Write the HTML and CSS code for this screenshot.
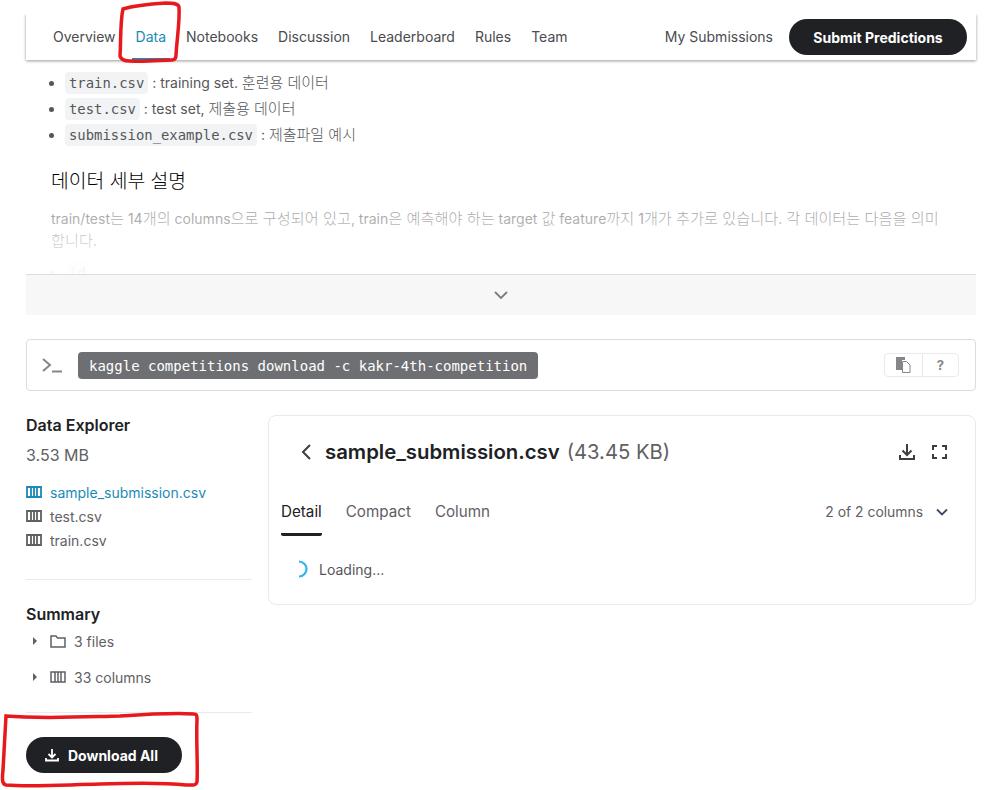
FILE: index.html
```html
<!DOCTYPE html>
<html lang="ko">

<head>
    <meta charset="UTF-8">
    <title>Data</title>
    <link rel="stylesheet" href="styles.css">
</head>

<body>
    <div class="page">
        <nav class="tabs">
            <a href="#">Overview</a>
            <a href="#" class="active">Data</a>
            <a href="#">Notebooks</a>
            <a href="#">Discussion</a>
            <a href="#">Leaderboard</a>
            <a href="#">Rules</a>
            <a href="#">Team</a>
            <a href="#" class="my-subs">My Submissions</a>
            <button class="pill submit">Submit Predictions</button>
        </nav>

        <div class="desc">
            <ul class="file-notes">
                <li><code>train.csv</code> : training set. <span class="ko">훈련용 데이터</span></li>
                <li><code>test.csv</code> : test set, <span class="ko">제출용 데이터</span></li>
                <li><code>submission_example.csv</code> : <span class="ko">제출파일 예시</span></li>
            </ul>
            <h3>데이터 세부 설명</h3>
            <p>train/test<span class="ko">는</span> 14<span class="ko">개의</span> columns<span class="ko">으로 구성되어 있고</span>, train<span class="ko">은 예측해야 하는</span> target <span class="ko">값</span> feature<span class="ko">까지</span> 1<span class="ko">개가 추가로 있습니다</span>. <span class="ko">각 데이터는 다음을 의미</span><br><span class="ko">합니다</span>.</p>
            <ul class="file-notes">
                <li><code>id</code></li>
            </ul>
            <div class="fade"></div>
        </div>
        <div class="expand">
            <svg width="16" height="10" viewBox="0 0 16 10"><path d="M2 2l6 6 6-6" fill="none" stroke="#7b7c80" stroke-width="1.8"/></svg>
        </div>

        <div class="cli">
            <svg width="22" height="16" viewBox="0 0 22 16"><path d="M1 2l7 6-7 6" fill="none" stroke="#85868a" stroke-width="2"/><path d="M10 14.500h10" stroke="#85868a" stroke-width="2"/></svg>
            <code class="cmd">kaggle competitions download -c kakr-4th-competition</code>
            <div class="cli-btns">
                <span class="cli-btn copy">
                    <svg width="15" height="16" viewBox="0 0 15 16"><path d="M0 0h9v3H6v10H0z" fill="#85868a"/><path d="M6.500 4.500h4l3.500 3.500v7.500H6.500z" fill="#fff" stroke="#85868a"/></svg>
                </span>
                <span class="cli-btn help">?</span>
            </div>
        </div>

        <div class="explorer">
            <aside class="side">
                <h4>Data Explorer</h4>
                <div class="size">3.53 MB</div>
                <ul class="files">
                    <li class="current">
                        <svg width="16" height="12" viewBox="0 0 16 12"><path d="M1 1h14v10H1zM5 1v10M8 1v10M11 1v10" fill="none" stroke="#1a8bb8" stroke-width="1.8"/></svg>
                        sample_submission.csv
                    </li>
                    <li>
                        <svg width="16" height="12" viewBox="0 0 16 12"><path d="M1 1h14v10H1zM5 1v10M8 1v10M11 1v10" fill="none" stroke="#5f6064" stroke-width="1.8"/></svg>
                        test.csv
                    </li>
                    <li>
                        <svg width="16" height="12" viewBox="0 0 16 12"><path d="M1 1h14v10H1zM5 1v10M8 1v10M11 1v10" fill="none" stroke="#5f6064" stroke-width="1.8"/></svg>
                        train.csv
                    </li>
                </ul>
                <div class="sum-block">
                    <h4>Summary</h4>
                    <div class="sum-row">
                        <span class="caret"></span>
                        <svg width="16" height="13" viewBox="0 0 16 13"><path d="M1 1h5l1.500 2H15v9H1z" fill="none" stroke="#5f6064" stroke-width="1.500"/></svg>
                        3 files
                    </div>
                    <div class="sum-row two">
                        <span class="caret"></span>
                        <svg width="16" height="12" viewBox="0 0 16 12"><path d="M1 1h14v10H1zM5 1v10M8 1v10M11 1v10" fill="none" stroke="#5f6064" stroke-width="1.500"/></svg>
                        33 columns
                    </div>
                </div>
                <div class="dl-block">
                    <button class="pill download">
                        <svg width="14" height="14" viewBox="0 0 14 14"><path d="M7 1v8M3.500 6L7 9.500 10.500 6M1 10v2.500h12V10" fill="none" stroke="#fff" stroke-width="1.800"/></svg>
                        Download All
                    </button>
                </div>
            </aside>

            <section class="viewer">
                <div class="viewer-head">
                    <svg width="12" height="18" viewBox="0 0 12 18"><path d="M10 2L3 9l7 7" fill="none" stroke="#3c3d41" stroke-width="2"/></svg>
                    <span class="fname">sample_submission.csv</span>
                    <span class="fsize">(43.45 KB)</span>
                    <div class="head-icons">
                        <svg width="18" height="18" viewBox="0 0 18 18"><path d="M9 1v11M4.500 7.500L9 12l4.500-4.500M2 12v4h14v-4" fill="none" stroke="#3c3d41" stroke-width="2"/></svg>
                        <svg width="15" height="14" viewBox="0 0 15 14"><path d="M1 5V1h4M10 1h4v4M14 9v4h-4M5 13H1V9" fill="none" stroke="#3c3d41" stroke-width="2"/></svg>
                    </div>
                </div>
                <div class="viewer-tabs">
                    <span class="vtab on">Detail</span>
                    <span class="vtab">Compact</span>
                    <span class="vtab">Column</span>
                    <span class="col-count">2 of 2 columns
                        <svg width="12" height="8" viewBox="0 0 12 8"><path d="M1 1.500l5 5 5-5" fill="none" stroke="#3c4a66" stroke-width="1.800"/></svg>
                    </span>
                </div>
                <div class="loading">
                    <svg width="14" height="18" viewBox="0 0 14 18"><path d="M2 1.500a7.500 7.500 0 0 1 0 15" fill="none" stroke="#2fb5ee" stroke-width="2.200"/></svg>
                    Loading...
                </div>
            </section>
        </div>
    </div>

    <!-- marcas rojas dibujadas a mano sobre la captura -->
    <svg class="marks" width="985" height="790" viewBox="0 0 985 790">
        <path d="M123 9C120 22 121 42 120 56 121 60 124 61 130 61 146 62 162 60 172 60 175 60 176 58 176 55 177 38 180 20 179 7 178 3 172 3 166 3 150 4 136 5 123 9Z" fill="none" stroke="#e8191c" stroke-width="3.500"/>
        <path d="M6 716C40 719 80 717 120 716 150 714 180 713 194 714 197 714 197 716 197 720 196 740 198 765 197 782 196 786 192 785 186 785 160 782 130 783 100 784 60 785 30 787 6 785 2 784 2 780 3 770 4 750 5 735 6 716Z" fill="none" stroke="#e8191c" stroke-width="3.500"/>
    </svg>
</body>

</html>
```

FILE: styles.css
```css
html,
body {
    margin: 0;
    height: 790px;
    overflow: hidden;
    background: #fff;
}

body {
    font-family: 'Inter', 'Noto Sans CJK KR', sans-serif;
    color: #202124;
    font-size: 14px;
}

.page {
    width: 950px;
    margin-left: 26px;
    padding-top: 14px;
}

.tabs {
    display: flex;
    align-items: center;
    height: 46px;
    padding: 0 9px 0 27px;
    box-sizing: border-box;
    box-shadow: 0 1px 3px rgba(0, 0, 0, 0.4);
    clip-path: inset(0 -6px -6px -6px);
    background: #fff;
}

.tabs a {
    color: #4a4b4f;
    text-decoration: none;
    font-size: 14px;
    margin-right: 20px;
    line-height: 46px;
    position: relative;
}

.tabs a.active {
    color: #1a8bb8;
}

.tabs a.active::after {
    content: '';
    position: absolute;
    left: -4px;
    right: -4px;
    bottom: 0;
    height: 2px;
    background: #1a8bb8;
}

.tabs a.my-subs {
    margin-left: auto;
    margin-right: 16px;
}

.pill {
    border: none;
    border-radius: 18px;
    background: #202124;
    color: #fff;
    font-family: 'Inter', sans-serif;
    font-size: 14px;
    font-weight: 700;
    height: 36px;
    cursor: pointer;
}

.submit {
    width: 178px;
}

.desc {
    position: relative;
    height: 214px;
    overflow: hidden;
    padding-top: 10px;
    box-sizing: border-box;
    color: #55565a;
}

.ko {
    font-size: 15px;
    font-weight: 300;
}

.file-notes {
    margin: 0;
    padding-left: 39px;
    list-style: disc;
}

.file-notes li {
    height: 26px;
    line-height: 26px;
}

.file-notes code {
    font-family: 'DejaVu Sans Mono', monospace;
    font-size: 13.900px;
    background: #f1f3f4;
    border-radius: 4px;
    padding: 3px 4px;
}

.desc h3 {
    position: relative;
    z-index: 1;
    margin: 20px 0 0 25px;
    font-size: 19.300px;
    font-weight: 300;
    line-height: 26px;
    color: #000;
}

.desc p {
    margin: 14px 0 8px 25px;
    line-height: 22px;
}

.desc p .ko {
    font-size: 15.200px;
}

.fade {
    position: absolute;
    left: 0;
    right: 0;
    top: 120px;
    bottom: 0;
    background: linear-gradient(to bottom, rgba(255, 255, 255, 0.2), rgba(255, 255, 255, 0.97));
}

.expand {
    height: 41px;
    box-sizing: border-box;
    border-top: 1px solid #dadce0;
    background: #f7f7f7;
    display: flex;
    justify-content: center;
    align-items: center;
}

.cli {
    display: flex;
    align-items: center;
    height: 52px;
    margin-top: 24px;
    box-sizing: border-box;
    border: 1px solid #dadce0;
    border-radius: 4px;
    padding: 0 16px 0 15px;
}

.cmd {
    margin-left: 14px;
    background: #6e6f73;
    color: #fff;
    border-radius: 4px;
    font-family: 'DejaVu Sans Mono', monospace;
    font-size: 14px;
    font-weight: 500;
    line-height: 25px;
    padding: 2px 11px 0;
}

.cli-btns {
    margin-left: auto;
    display: flex;
    border: 1px solid #e8eaed;
    border-radius: 4px;
    height: 24px;
    box-sizing: border-box;
}

.cli-btn {
    width: 35px;
    display: flex;
    align-items: center;
    justify-content: center;
}

.cli-btn.copy {
    width: 37px;
}

.cli-btn.help {
    border-left: 1px solid #e8eaed;
    font-weight: 700;
    font-size: 13px;
    color: #85868a;
}

.explorer {
    display: flex;
    margin-top: 24px;
    gap: 16px;
}

.side {
    width: 226px;
    flex: none;
}

.side h4 {
    margin: 0;
    font-size: 16px;
    font-weight: 600;
    line-height: 20px;
}

.size {
    margin-top: 10px;
    font-size: 16px;
    line-height: 20px;
    color: #5f6064;
}

.files {
    list-style: none;
    margin: 15px 0 0;
    padding: 0 0 27px;
    border-bottom: 1px solid #e8eaed;
}

.files li {
    display: flex;
    align-items: center;
    gap: 8px;
    height: 24px;
    color: #5f6064;
}

.files li.current {
    color: #1a8bb8;
}

.sum-block {
    padding: 24px 0 25px;
    border-bottom: 1px solid #e8eaed;
}

.sum-row {
    display: flex;
    align-items: center;
    gap: 8px;
    height: 20px;
    margin-top: 7px;
    padding-left: 7px;
    color: #5f6064;
}

.sum-row.two {
    margin-top: 16px;
}

.caret {
    width: 0;
    height: 0;
    border-left: 4px solid #5f6064;
    border-top: 4px solid transparent;
    border-bottom: 4px solid transparent;
    margin-right: 5px;
}

.dl-block {
    padding-top: 24px;
}

.download {
    width: 156px;
    display: flex;
    align-items: center;
    gap: 9px;
    padding: 0 0 0 19px;
}

.viewer {
    flex: 1;
    height: 190px;
    box-sizing: border-box;
    border: 1px solid #e8eaed;
    border-radius: 8px;
    padding: 0 12px;
}

.viewer-head {
    display: flex;
    align-items: center;
    height: 72px;
    padding: 0 16px 0 19px;
}

.fname {
    margin-left: 13px;
    padding-bottom: 2px;
    font-size: 20.350px;
    font-weight: 600;
}

.fsize {
    margin-left: 7px;
    padding-bottom: 2px;
    font-size: 20.200px;
    color: #5f6064;
}

.head-icons {
    margin-left: auto;
    display: flex;
    align-items: center;
    gap: 16px;
}

.viewer-tabs {
    display: flex;
    align-items: flex-start;
    gap: 24px;
    height: 48px;
    font-size: 15.200px;
    color: #5f6064;
    padding-top: 14px;
    box-sizing: border-box;
}

.vtab {
    line-height: 20px;
}

.vtab.on {
    color: #202124;
    height: 31px;
    border-bottom: 3px solid #202124;
    border-radius: 0 0 2px 2px;
}

.col-count {
    margin-left: auto;
    margin-right: 15px;
    font-size: 13.900px;
    line-height: 20px;
    display: flex;
    align-items: center;
    gap: 13px;
}

.loading {
    display: flex;
    align-items: center;
    gap: 8px;
    margin-top: 24px;
    padding-left: 16px;
    color: #55565a;
}

.marks {
    position: absolute;
    left: 0;
    top: 0;
    pointer-events: none;
}
```
